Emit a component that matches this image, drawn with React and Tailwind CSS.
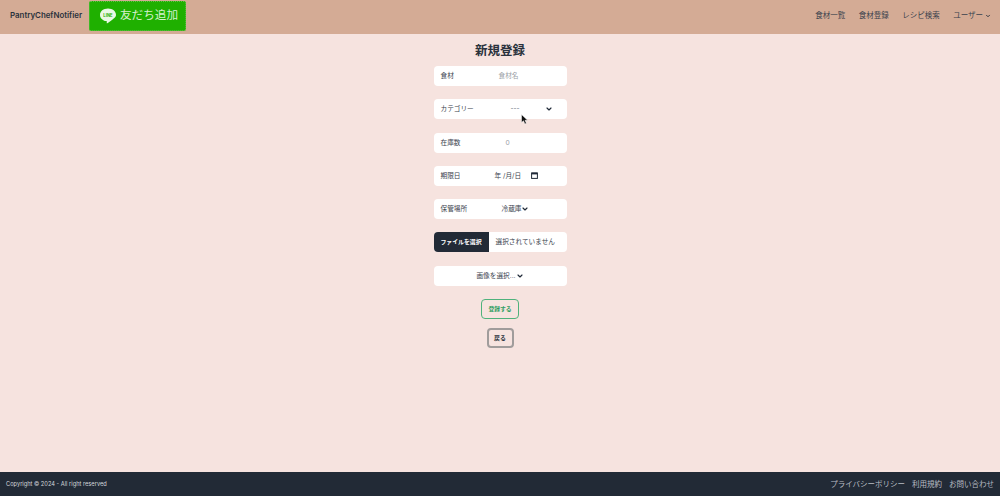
import React from 'react';
import { ChevronDown } from 'lucide-react';

const FONT = '"Inter", "Noto Sans CJK JP", sans-serif';

function Row({ label, children }) {
    return (
        <div className="flex items-center h-5 w-[133px] bg-white rounded-[4px] pl-[7px] text-[6.67px] text-[#3a424d]">
            <span className="w-[50px] shrink-0">{label}</span>
            {children}
        </div>
    );
}

function Chevron({ className, size = 8 }) {
    return <ChevronDown className={className} size={size} strokeWidth={3.5} color="#1f2937" />;
}

function CalendarIcon() {
    return (
        <svg width="7" height="7" viewBox="0 0 7 7" className="ml-[10px]">
            <rect x="0.6" y="1" width="5.8" height="5.4" fill="none" stroke="#1f2937" strokeWidth="1" />
            <rect x="0.6" y="0.6" width="5.8" height="1.8" fill="#1f2937" />
        </svg>
    );
}

function LineButton() {
    return (
        <div className="flex items-center w-[97px] h-[30px] bg-[#1fb000] rounded-[2px] pl-[9px] gap-[3px] border border-dotted border-[#5fc04a]">
            <svg width="18" height="18" viewBox="0 0 18 18">
                <path d="M9 1.5C4.4 1.5 1 4.3 1 7.9c0 3.2 2.7 5.7 6.3 6.2.5.1.6.4.5.8l-.1 1c0 .4.3.5.7.3 1.8-1 4.7-2.9 6.3-4.6 1.3-1.2 2.3-2.3 2.3-3.7 0-3.6-3.4-6.4-8-6.4z" fill="#e9f8e5" />
                <text x="9" y="9.6" textAnchor="middle" fontSize="4.2" fontWeight="700" fill="#1fb000" fontFamily={FONT}>LINE</text>
            </svg>
            <span className="text-[11.6px] leading-none text-[#d5f0ce]">友だち追加</span>
        </div>
    );
}

function Cursor() {
    return (
        <svg width="8" height="11" viewBox="0 0 8 11" className="absolute left-[521px] top-[114px]">
            <path d="M0.5 0.5v8l2-1.7 1.4 3.2 1.5-.7-1.4-3h2.6z" fill="#111" stroke="#fff" strokeWidth="0.5" />
        </svg>
    );
}

export default function App() {
    return (
        <div className="relative flex flex-col h-[496px] bg-[#f6e3df] overflow-hidden" style={{ fontFamily: FONT }}>
            <header className="flex items-center justify-between h-[34px] bg-[#d4ab95] pl-[10px] pr-[9px] pb-[3px]">
                <div className="flex items-center gap-[7px]">
                    <span className="w-[72px] whitespace-nowrap text-[7.9px] font-semibold text-[#2a323c]">PantryChefNotifier</span>
                    <LineButton />
                </div>
                <nav className="flex items-center gap-[13.5px] text-[7.5px] text-[#3a424d] pt-[1px]">
                    <span>食材一覧</span>
                    <span>食材登録</span>
                    <span>レシピ検索</span>
                    <span className="flex items-center gap-[2px]">ユーザー<Chevron size={6} /></span>
                </nav>
            </header>

            <main className="flex-1 flex flex-col items-center">
                <h1 className="mt-[8px] mb-[6px] text-[12.5px] leading-[18px] font-bold text-[#2a323c]">新規登録</h1>
                <div className="flex flex-col items-center gap-[13.3px]">
                    <Row label="食材">
                        <span className="ml-[8px] text-[#9a9ea5]">食材名</span>
                    </Row>
                    <Row label="カテゴリー">
                        <span className="ml-[20px] text-[#6b7280]">---</span>
                        <Chevron className="ml-[25px]" />
                    </Row>
                    <Row label="在庫数">
                        <span className="ml-[15px] text-[#9a9ea5]">0</span>
                    </Row>
                    <Row label="期限日">
                        <span className="ml-[4px] whitespace-pre">年 /月/日</span>
                        <CalendarIcon />
                    </Row>
                    <Row label="保管場所">
                        <span className="ml-[11px]">冷蔵庫</span>
                        <Chevron />
                    </Row>
                    <div className="flex items-center h-5 w-[133px] bg-white rounded-[4px] overflow-hidden text-[6.67px]">
                        <span className="flex items-center justify-center w-[55px] h-full bg-[#222a36] text-white text-[5.9px] font-semibold">ファイルを選択</span>
                        <span className="ml-[7px] text-[#3a424d]">選択されていません</span>
                    </div>
                    <div className="flex items-center justify-center h-5 w-[133px] bg-white rounded-[4px] text-[6.67px] text-[#3a424d]">
                        画像を選択...<Chevron />
                    </div>
                </div>
                <button className="mt-[13px] w-[38px] h-5 pt-[1px] rounded-[4px] border border-[#4fb27c] text-[5.8px] font-semibold text-[#2f9e62]">登録する</button>
                <button className="mt-[9px] w-[27px] h-5 pt-[1px] rounded-[4px] border-2 border-[#a09c9b] text-[5.9px] font-semibold text-[#2a323c]">戻る</button>
            </main>

            <footer className="flex items-center justify-between h-6 bg-[#222a36] px-[6px] pt-[1px]">
                <span className="text-[5.7px] text-[#d5d8dc]">Copyright © 2024 - All right reserved</span>
                <div className="flex items-center gap-[7px] text-[7.5px] text-[#b9bdc4]">
                    <span>プライバシーポリシー</span>
                    <span>利用規約</span>
                    <span>お問い合わせ</span>
                </div>
            </footer>
            <Cursor />
        </div>
    );
}
